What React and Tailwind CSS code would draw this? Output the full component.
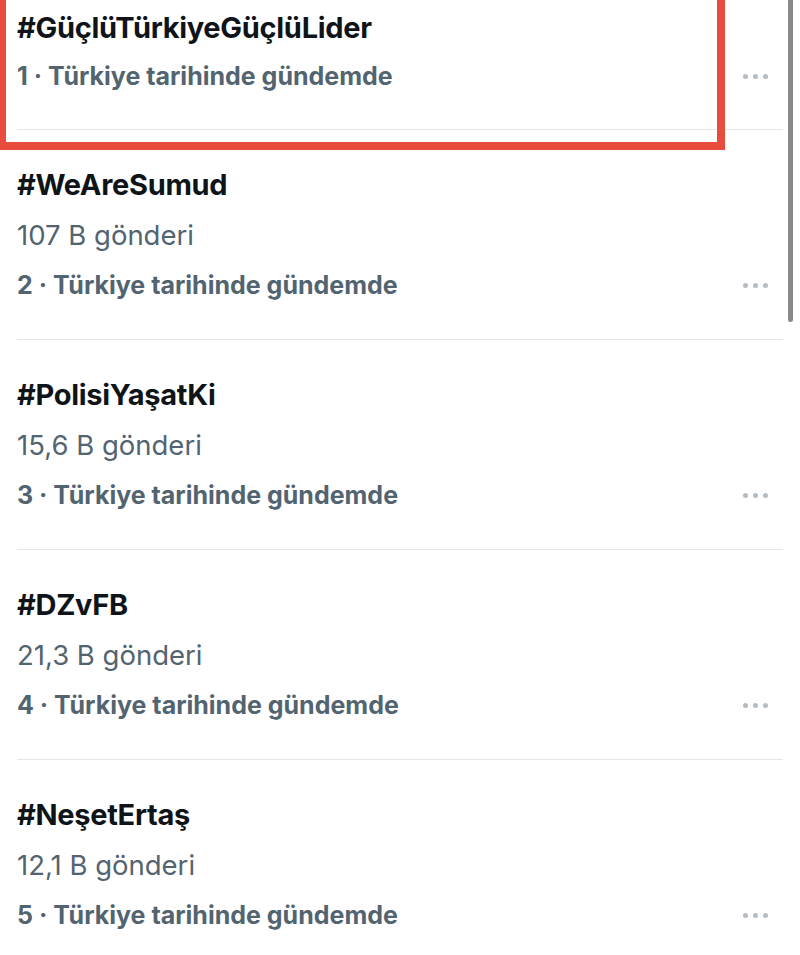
import React from "react";

const trends = [
  { tag: "#GüçlüTürkiyeGüçlüLider", rank: 1 },
  { tag: "#WeAreSumud", count: "107 B gönderi", rank: 2 },
  { tag: "#PolisiYaşatKi", count: "15,6 B gönderi", rank: 3 },
  { tag: "#DZvFB", count: "21,3 B gönderi", rank: 4 },
  { tag: "#NeşetErtaş", count: "12,1 B gönderi", rank: 5 },
];

const Dots = () => (
  <div className="flex items-center gap-[5px] pr-[15px]">
    <span className="w-[5px] h-[5px] rounded-full bg-[#b4bcc4]" />
    <span className="w-[5px] h-[5px] rounded-full bg-[#b4bcc4]" />
    <span className="w-[5px] h-[5px] rounded-full bg-[#b4bcc4]" />
  </div>
);

const TrendRow = ({ trend, first }) => (
  <div
    className={`border-b border-[#e4e7ea] ${first ? "pt-[10px] pb-[35px]" : "pt-[37px] pb-[36px]"}`}
  >
    <div className="text-[29px] leading-[36px] font-bold text-[#0f1419] tracking-[-0.3px]">
      {trend.tag}
    </div>
    {trend.count && (
      <div className="mt-[14px] text-[27.5px] leading-[36px] text-[#536471]">
        {trend.count}
      </div>
    )}
    <div
      className={`${first ? "mt-[12px]" : "mt-[14px]"} flex items-center justify-between`}
    >
      <span className="text-[25px] leading-[36px] font-bold text-[#536471]">
        {trend.rank} · Türkiye tarihinde gündemde
      </span>
      <Dots />
    </div>
  </div>
);

export default function App() {
  return (
    <div
      className="relative w-[800px] h-[955px] overflow-hidden bg-white"
      style={{ fontFamily: "Inter, 'Noto Sans', sans-serif" }}
    >
      <div className="ml-[17px] mr-[17px]">
        {trends.map((t, i) => (
          <TrendRow key={t.rank} trend={t} first={i === 0} />
        ))}
      </div>

      {/* annotation box around the first trend */}
      <div className="absolute left-[-2px] top-[-20px] w-[727px] h-[170px] border-[8px] border-[#e84c3d]" />

      {/* scrollbar */}
      <div className="absolute right-[7px] top-0 w-[5px] h-[322px] rounded-b-full bg-[#8a8a8a]" />
    </div>
  );
}
